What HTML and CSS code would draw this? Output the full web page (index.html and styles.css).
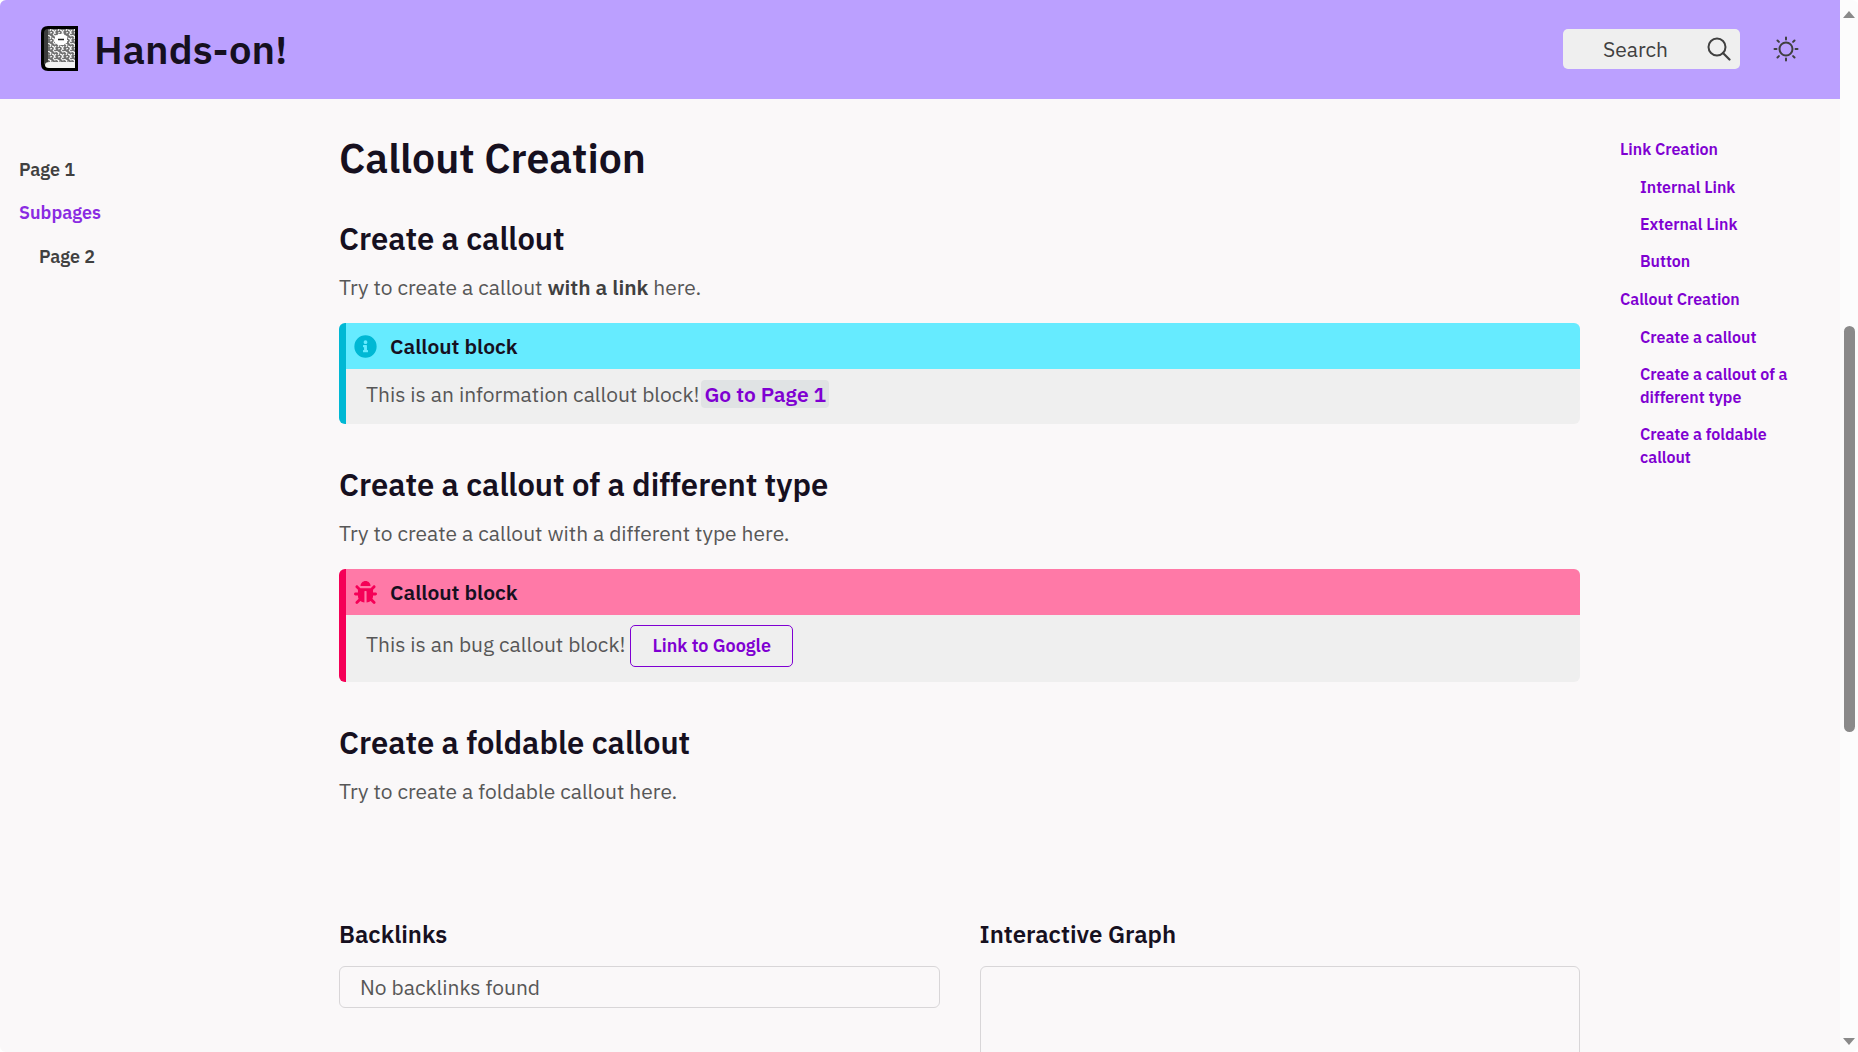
FILE: index.html
```html
<!DOCTYPE html>
<html lang="en">
<head>
<meta charset="utf-8">
<meta name="viewport" content="width=device-width, initial-scale=1">
<title>Hands-on!</title>
<link rel="stylesheet" href="styles.css">
</head>
<body>
<div class="window">
  <div class="page">
    <header class="topbar">
      <a class="brand" href="#">
        <svg class="brand-icon" viewBox="0 0 38 46" aria-hidden="true">
          <defs>
            <pattern id="marble" width="8" height="8" patternUnits="userSpaceOnUse">
              <rect width="8" height="8" fill="#707070"/>
              <path d="M0 1.500l2 1.500-1 2M4 0l1.500 2L8 1.500M3 4l2 1 .5 2M7 4l-1 1.500M1 7l2-.5M4.500 7.500L7 7" fill="none" stroke="#fff" stroke-width="1.100"/>
            </pattern>
          </defs>
          <path d="M7 0H37V45H7Q0 45 0 38V7Q0 0 7 0Z" fill="#000"/>
          <path d="M7 3V36Q4 37 3 39V7Q3 3 7 3Z" fill="#3c3c3c"/>
          <rect x="7" y="3" width="27" height="33" fill="url(#marble)"/>
          <path d="M34 36v6H8q-4 0-4-3t4-3z" fill="#f2f2f2"/>
          <path d="M17 8h6l1 2h2v7h-2l-1 2h-6l-1-2h-2v-7h2z" fill="#fff"/>
          <path d="M17 13.500h6" stroke="#222" stroke-width="1.500"/>
        </svg>
        <span>Hands-on!</span>
      </a>
      <div class="tools">
        <button class="search" type="button">
          <span>Search</span>
          <svg viewBox="0 0 24 24" width="24" height="24" aria-hidden="true"><circle cx="10" cy="10" r="8.500" fill="none" stroke="currentColor" stroke-width="2"/><path d="M16 16l6.500 6.500" stroke="currentColor" stroke-width="2.200" stroke-linecap="round"/></svg>
        </button>
        <button class="theme" type="button" aria-label="Switch theme">
          <svg viewBox="0 0 26 26" width="26" height="26" aria-hidden="true"><g fill="none" stroke="currentColor" stroke-width="2" stroke-linecap="round"><circle cx="13" cy="13" r="6.500"/><path d="M13 1.500v2M13 22.500v2M1.500 13h2M22.500 13h2M4.500 4.500l1.400 1.400M20.100 20.100l1.400 1.400M21.500 4.500l-1.400 1.400M5.900 20.100l-1.400 1.400"/></g></svg>
        </button>
      </div>
    </header>

    <div class="columns">
      <nav class="pages" aria-label="Pages">
        <ul>
          <li><a href="#">Page 1</a></li>
          <li><a class="current" href="#">Subpages</a>
            <ul><li><a href="#">Page 2</a></li></ul>
          </li>
        </ul>
      </nav>

      <main class="content">
        <h1 id="callouts">Callout Creation</h1>

        <h2 id="callout">Create a callout</h2>
        <p>Try to create a callout <strong>with a link</strong> here.</p>
        <section class="callout info">
          <h3><svg viewBox="0 0 512 512" aria-hidden="true"><path fill="currentColor" fill-rule="evenodd" d="M256 8a248 248 0 1 0 0 496 248 248 0 1 0 0-496zm0 110a42 42 0 1 1 0 84 42 42 0 1 1 0-84zm56 254c0 6.600-5.400 12-12 12h-88c-6.600 0-12-5.400-12-12v-24c0-6.600 5.400-12 12-12h12v-64h-12c-6.600 0-12-5.400-12-12v-24c0-6.600 5.400-12 12-12h64c6.600 0 12 5.400 12 12v100h12c6.600 0 12 5.400 12 12z"/></svg>Callout block</h3>
          <p>This is an information callout block! <a class="internal" href="#">Go to Page 1</a></p>
        </section>

        <h2 id="type">Create a callout of a different type</h2>
        <p>Try to create a callout with a different type here.</p>
        <section class="callout bug">
          <h3><svg viewBox="0 0 512 512" aria-hidden="true"><path fill="currentColor" d="M511.988 288.900c-.478 17.430-15.217 31.100-32.653 31.100H424v16c0 21.864-4.882 42.584-13.600 61.145l60.228 60.228c12.496 12.497 12.496 32.758 0 45.255-12.498 12.497-32.759 12.496-45.256 0l-54.736-54.736C345.886 467.965 314.351 480 280 480V236c0-6.627-5.373-12-12-12h-24c-6.627 0-12 5.373-12 12v244c-34.351 0-65.886-12.035-90.636-32.108l-54.736 54.736c-12.498 12.497-32.759 12.496-45.256 0-12.496-12.497-12.496-32.758 0-45.255l60.228-60.228C92.882 378.584 88 357.864 88 336v-16H32.666C15.230 320 .491 306.330.013 288.900-.484 270.816 14.028 256 32 256h56v-58.745l-46.628-46.628c-12.496-12.497-12.496-32.758 0-45.255 12.498-12.497 32.758-12.497 45.256 0L141.255 160h229.489l54.627-54.627c12.498-12.497 32.758-12.497 45.256 0 12.496 12.497 12.496 32.758 0 45.255L424 197.255V256h56c17.972 0 32.484 14.816 31.988 32.900zM257 0c-61.856 0-112 50.144-112 112h224C369 50.144 318.856 0 257 0z"/></svg>Callout block</h3>
          <p>This is an bug callout block! <a class="outline" href="#">Link to Google</a></p>
        </section>

        <h2 id="foldable">Create a foldable callout</h2>
        <p>Try to create a foldable callout here.</p>

        <div class="panels">
          <section>
            <h3>Backlinks</h3>
            <div class="panel">No backlinks found</div>
          </section>
          <section>
            <h3>Interactive Graph</h3>
            <div class="panel graph"></div>
          </section>
        </div>
      </main>

      <nav class="toc" aria-label="On this page">
        <ul>
          <li><a href="#">Link Creation</a>
            <ul>
              <li><a href="#">Internal Link</a></li>
              <li><a href="#">External Link</a></li>
              <li><a href="#">Button</a></li>
            </ul>
          </li>
          <li><a href="#callouts">Callout Creation</a>
            <ul>
              <li><a href="#callout">Create a callout</a></li>
              <li><a href="#type">Create a callout of a different type</a></li>
              <li><a href="#foldable">Create a foldable callout</a></li>
            </ul>
          </li>
        </ul>
      </nav>
    </div>
  </div>

  <div class="scrollbar" aria-hidden="true">
    <span class="arrow up"></span>
    <span class="track"><span class="thumb"></span></span>
    <span class="arrow down"></span>
  </div>
</div>
</body>
</html>
```
FILE: styles.css
```css
:root {
  --text: #575757;
  --heading: #16101f;
  --accent: #7f00d2;
  --line: #d8d6d8;
  --panel: #efefef;
}

* { box-sizing: border-box; }

body {
  margin: 0;
  background: #fff;
  color: var(--text);
  font: 400 21px/30px "IBM Plex Sans", "Noto Sans", sans-serif;
}

h1, h2, h3, p, ul { margin: 0; }
ul { padding: 0; list-style: none; }
a { color: var(--accent); text-decoration: none; }
h1, h2, h3 { color: var(--heading); font-weight: 600; }
button { font: inherit; border: 0; padding: 0; cursor: pointer; }

.window {
  display: flex;
  height: 100vh;
  overflow: hidden;
  border-radius: 6px;
  background: #fcfcfc;
}

.page {
  flex: 1;
  min-width: 0;
  overflow: hidden;
  background: #faf8f9;
}

.topbar {
  display: flex;
  align-items: center;
  justify-content: space-between;
  height: 99px;
  padding: 0 41px 1px;
  background: #bba0ff;
}

.brand {
  display: flex;
  align-items: center;
  gap: 15px;
  color: var(--heading);
  font-size: 40px;
  font-weight: 600;
  line-height: 52px;
}

.brand-icon { width: 38px; height: 46px; }

.tools { display: flex; align-items: center; gap: 33px; }

.search {
  display: flex;
  align-items: center;
  justify-content: space-between;
  width: 177px;
  height: 40px;
  padding: 0 9px 0 40px;
  border-radius: 5px;
  background: var(--panel);
  color: #404040;
}

.theme { display: flex; background: none; color: #404040; }

.columns {
  display: grid;
  grid-template-columns: 280px minmax(0, 1fr) 180px;
  gap: 40px;
  padding: 0 40px 0 19px;
}

.pages { padding-top: 57px; font-size: 18px; line-height: 27px; font-weight: 600; }
.pages ul { display: grid; gap: 16px; }
.pages ul ul { padding: 17px 0 0 20px; }
.pages a { display: block; color: #404040; }
.pages .current { color: #8a2be2; }

.content { padding-top: 33px; }
.content h1 { font-size: 41px; line-height: 52px; }
.content h2 { margin-top: 36px; font-size: 31px; line-height: 38px; }
.content h2 + p { margin-top: 14px; }
.content strong { font-weight: 600; color: #404040; }

.callout {
  margin-top: 21px;
  overflow: hidden;
  border-left: 7px solid var(--edge);
  border-radius: 6px;
  background: var(--panel);
}

.callout h3 {
  display: flex;
  align-items: center;
  gap: 13px;
  height: 46px;
  padding-left: 8px;
  background: var(--tint);
  font-size: 21px;
}

.callout h3 svg { width: 23px; height: 23px; color: var(--edge); }
.callout p { padding: 10px 20px 15px; }
.content .callout + h2 { margin-top: 42px; }

.info { --edge: #00b8d4; --tint: #66ebff; }
.bug { --edge: #f50057; --tint: #ff79a7; }

.internal {
  margin: 0 -3px;
  padding: 0 3px;
  border-radius: 4px;
  background: #e0e3e4;
  font-weight: 600;
}

.outline {
  display: inline-block;
  height: 42px;
  padding: 0 21px;
  border: 1px solid var(--accent);
  border-radius: 5px;
  font-size: 18px;
  line-height: 40px;
  font-weight: 600;
}

.panels {
  display: grid;
  grid-template-columns: repeat(2, minmax(0, 1fr));
  gap: 40px;
  margin-top: 112px;
}

.panels h3 { font-size: 24px; line-height: 32px; }

.panel {
  margin-top: 16px;
  padding: 5px 20px;
  border: 1px solid var(--line);
  border-radius: 6px;
}

.graph { height: 300px; }

.toc { padding-top: 39px; font-size: 16px; line-height: 23px; font-weight: 600; }
.toc ul { display: grid; gap: 15px; }
.toc ul ul { gap: 14px; padding: 15px 0 0 20px; }
.toc a { display: block; }

.scrollbar {
  display: flex;
  flex-direction: column;
  align-items: center;
  width: 18px;
  padding: 11px 0 7px;
}

.arrow { border: 0 solid transparent; border-width: 0 6px; }
.up { border-bottom: 7px solid #8a8a8a; }
.down { border-top: 7px solid #8a8a8a; }
.track { display: flex; flex: 1; flex-direction: column; width: 11px; }
.track::before { content: ""; flex: 308; }
.track::after { content: ""; flex: 306; }
.thumb { flex: 406; border-radius: 6px; background: #8a8a8a; }
```
